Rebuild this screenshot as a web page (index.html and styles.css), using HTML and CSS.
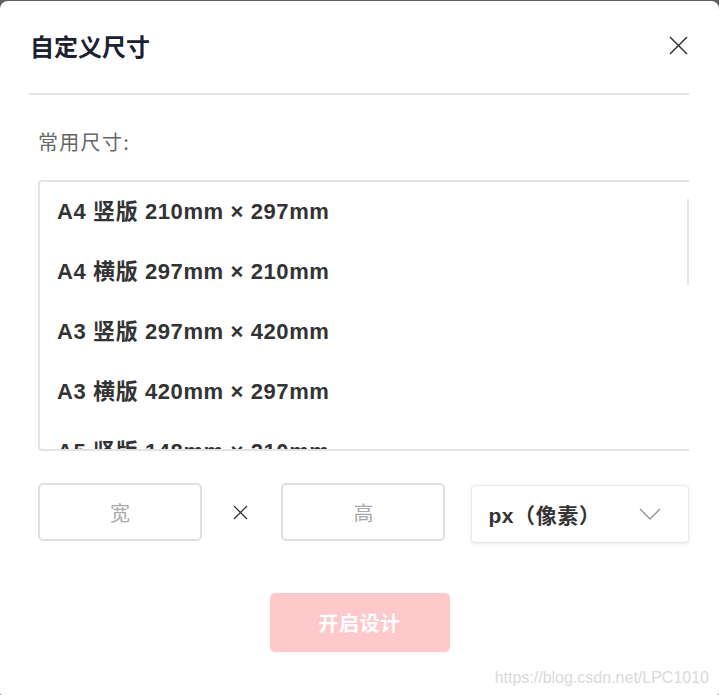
FILE: index.html
```html
<!DOCTYPE html>
<html lang="zh-CN">
<head>
  <meta charset="UTF-8" />
  <meta name="viewport" content="width=device-width, initial-scale=1.0"/>
  <title>自定义尺寸</title>
  <link rel="stylesheet" href="styles.css">
</head>
<body>
  <div class="dialog">
    <div class="dialog-header">
      <h3>自定义尺寸</h3>
      <button class="close" aria-label="关闭">
        <svg width="19" height="19" viewBox="0 0 19 19"><path d="M1 1L18 18M18 1L1 18" stroke="#333" stroke-width="1.5" fill="none"/></svg>
      </button>
    </div>

    <div class="dialog-body">
      <div class="label">常用尺寸:</div>
      <div class="size-list">
        <div class="size-item">A4 竖版 210mm × 297mm</div>
        <div class="size-item">A4 横版 297mm × 210mm</div>
        <div class="size-item">A3 竖版 297mm × 420mm</div>
        <div class="size-item">A3 横版 420mm × 297mm</div>
        <div class="size-item">A5 竖版 148mm × 210mm</div>
        <div class="size-item">A5 横版 210mm × 148mm</div>
        <div class="scroll-thumb"></div>
      </div>

      <div class="custom-row">
        <input class="size-input" type="text" placeholder="宽">
        <div class="times">
          <svg width="15" height="15" viewBox="0 0 15 15"><path d="M1 1L14 14M14 1L1 14" stroke="#333" stroke-width="1.3" fill="none"/></svg>
        </div>
        <input class="size-input" type="text" placeholder="高">
        <div class="unit-select">
          <span>px（像素）</span>
          <svg width="22" height="13" viewBox="0 0 22 13"><path d="M1 1L11 11L21 1" stroke="#999" stroke-width="1.5" fill="none"/></svg>
        </div>
      </div>
    </div>

    <div class="dialog-footer">
      <button class="btn-start">开启设计</button>
    </div>

    <div class="watermark">https://blog.csdn.net/LPC1010</div>
  </div>
</body>
</html>
```

FILE: styles.css
```css
* { box-sizing: border-box; }
body {
  margin: 0;
  background: #5f5f5f;
  font-family: 'Liberation Sans', 'Noto Sans CJK SC', sans-serif;
}
.dialog {
  position: relative;
  width: 719px;
  height: 694px;
  margin-top: 1px;
  background: #fff;
  border-radius: 8px 8px 2px 2px;
  overflow: hidden;
}
.dialog-header {
  display: flex;
  justify-content: space-between;
  align-items: center;
  height: 94px;
  margin: 0 30px 0 29px;
  padding: 0 1px 4px 1px;
  border-bottom: 2px solid #e4e4e4;
}
.dialog-header h3 {
  margin: 0;
  font-family: 'Noto Sans CJK SC', sans-serif;
  font-size: 24px;
  font-weight: 600;
  color: #1b2133;
}
.close {
  border: none;
  background: none;
  padding: 0;
  width: 19px;
  height: 19px;
  cursor: pointer;
}
.close svg { display: block; }
.dialog-body {
  margin: 0 30px 0 38px;
}
.label {
  margin-top: 37px;
  font-family: 'Noto Sans CJK SC', sans-serif;
  font-size: 20px;
  line-height: 20px;
  color: #666;
  letter-spacing: 1.3px;
}
.size-list {
  position: relative;
  margin-top: 28px;
  height: 271px;
  border: 2px solid #e3e3e3;
  border-right: none;
  border-radius: 4px 0 0 4px;
  overflow: hidden;
}
.size-item {
  height: 60px;
  line-height: 60px;
  padding-left: 17px;
  font-size: 22px;
  font-weight: bold;
  letter-spacing: 0.6px;
  color: #333;
  white-space: nowrap;
}
.scroll-thumb {
  position: absolute;
  right: 0;
  top: 17px;
  width: 2px;
  height: 86px;
  background: #e6e6e6;
}
.custom-row {
  display: flex;
  align-items: flex-start;
  margin-top: 32px;
}
.size-input {
  width: 164px;
  height: 58px;
  border: 2px solid #e0e0e0;
  border-radius: 5px;
  font-family: 'Noto Sans CJK SC', sans-serif;
  font-size: 20px;
  text-align: center;
  outline: none;
}
.size-input::placeholder { color: #aaa; }
.times {
  width: 80px;
  height: 58px;
  display: flex;
  justify-content: center;
  align-items: center;
}
.times svg { display: block; margin-left: -2px; }
.unit-select {
  display: flex;
  justify-content: space-between;
  align-items: center;
  width: 219px;
  height: 58px;
  margin: 2px 0 0 26px;
  padding: 0 27px 0 16px;
  border: 1px solid #e8e8e8;
  border-radius: 4px;
  box-shadow: 0 1px 4px rgba(0,0,0,0.1);
  font-size: 21px;
  font-weight: bold;
  letter-spacing: 0.6px;
  color: #333;
}
.unit-select svg { display: block; }
.dialog-footer {
  display: flex;
  justify-content: center;
  margin-top: 50px;
}
.btn-start {
  width: 180px;
  height: 59px;
  border: none;
  border-radius: 5px;
  background: #ffc8ca;
  color: #fff;
  font-family: 'Noto Sans CJK SC', sans-serif;
  font-size: 20px;
  font-weight: bold;
  letter-spacing: 0.5px;
  cursor: pointer;
}
.watermark {
  position: absolute;
  right: 10px;
  bottom: 8px;
  font-family: 'Liberation Sans', sans-serif;
  font-size: 16px;
  color: #d9d9d9;
}
```
